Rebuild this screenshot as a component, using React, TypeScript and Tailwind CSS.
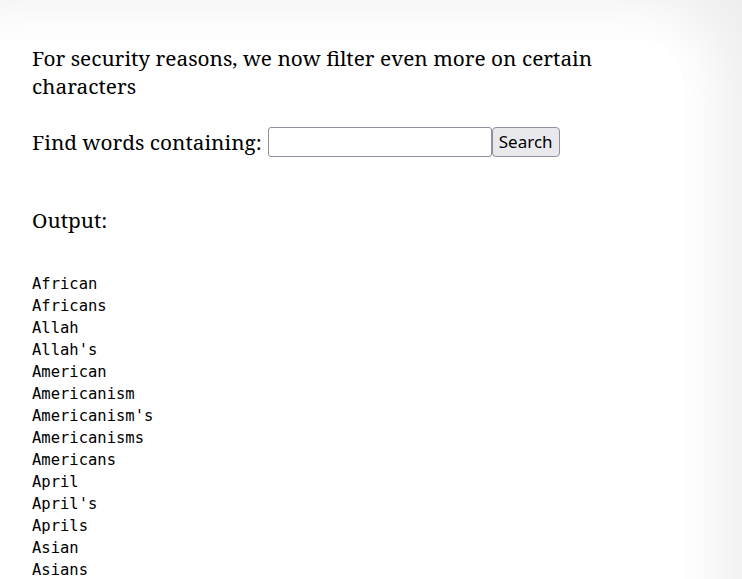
import React from "react";

const words = [
  "African",
  "Africans",
  "Allah",
  "Allah's",
  "American",
  "Americanism",
  "Americanism's",
  "Americanisms",
  "Americans",
  "April",
  "April's",
  "Aprils",
  "Asian",
  "Asians",
];

export default function App() {
  return (
    <div className="h-[579px] overflow-hidden bg-[#eeeeee] pt-[40px] pr-[60px]">
      <div
        className="h-[700px] bg-white rounded-tr-[40px] shadow-[0_0_60px_40px_#ffffff] pl-[32px] pt-[4px] text-black"
        style={{ fontFamily: '"Noto Serif", "DejaVu Serif", serif' }}
      >
        <p className="text-[20.8px] leading-[28px] pr-[20px]">
          For security reasons, we now filter even more on certain characters
        </p>
        <form className="mt-[27px] flex items-center text-[20.8px] leading-[28px]">
          <label>Find words containing:</label>
          <input
            type="text"
            className="ml-[6px] w-[224px] h-[30px] border border-[#8f8f9d] rounded-[3px] bg-white"
          />
          <button
            type="button"
            className="h-[30px] px-[6px] border border-[#8f8f9d] rounded-[4px] bg-[#e9e9ed] text-[17px] leading-[22px]"
            style={{ fontFamily: '"Noto Sans", "DejaVu Sans", sans-serif' }}
          >
            Search
          </button>
        </form>
        <p className="mt-[49px] text-[20.8px] leading-[28px]">Output:</p>
        <pre
          className="mt-[39px] text-[15.5px] leading-[22px]"
          style={{ fontFamily: '"DejaVu Sans Mono", monospace' }}
        >
          {words.join("\n")}
        </pre>
      </div>
    </div>
  );
}
